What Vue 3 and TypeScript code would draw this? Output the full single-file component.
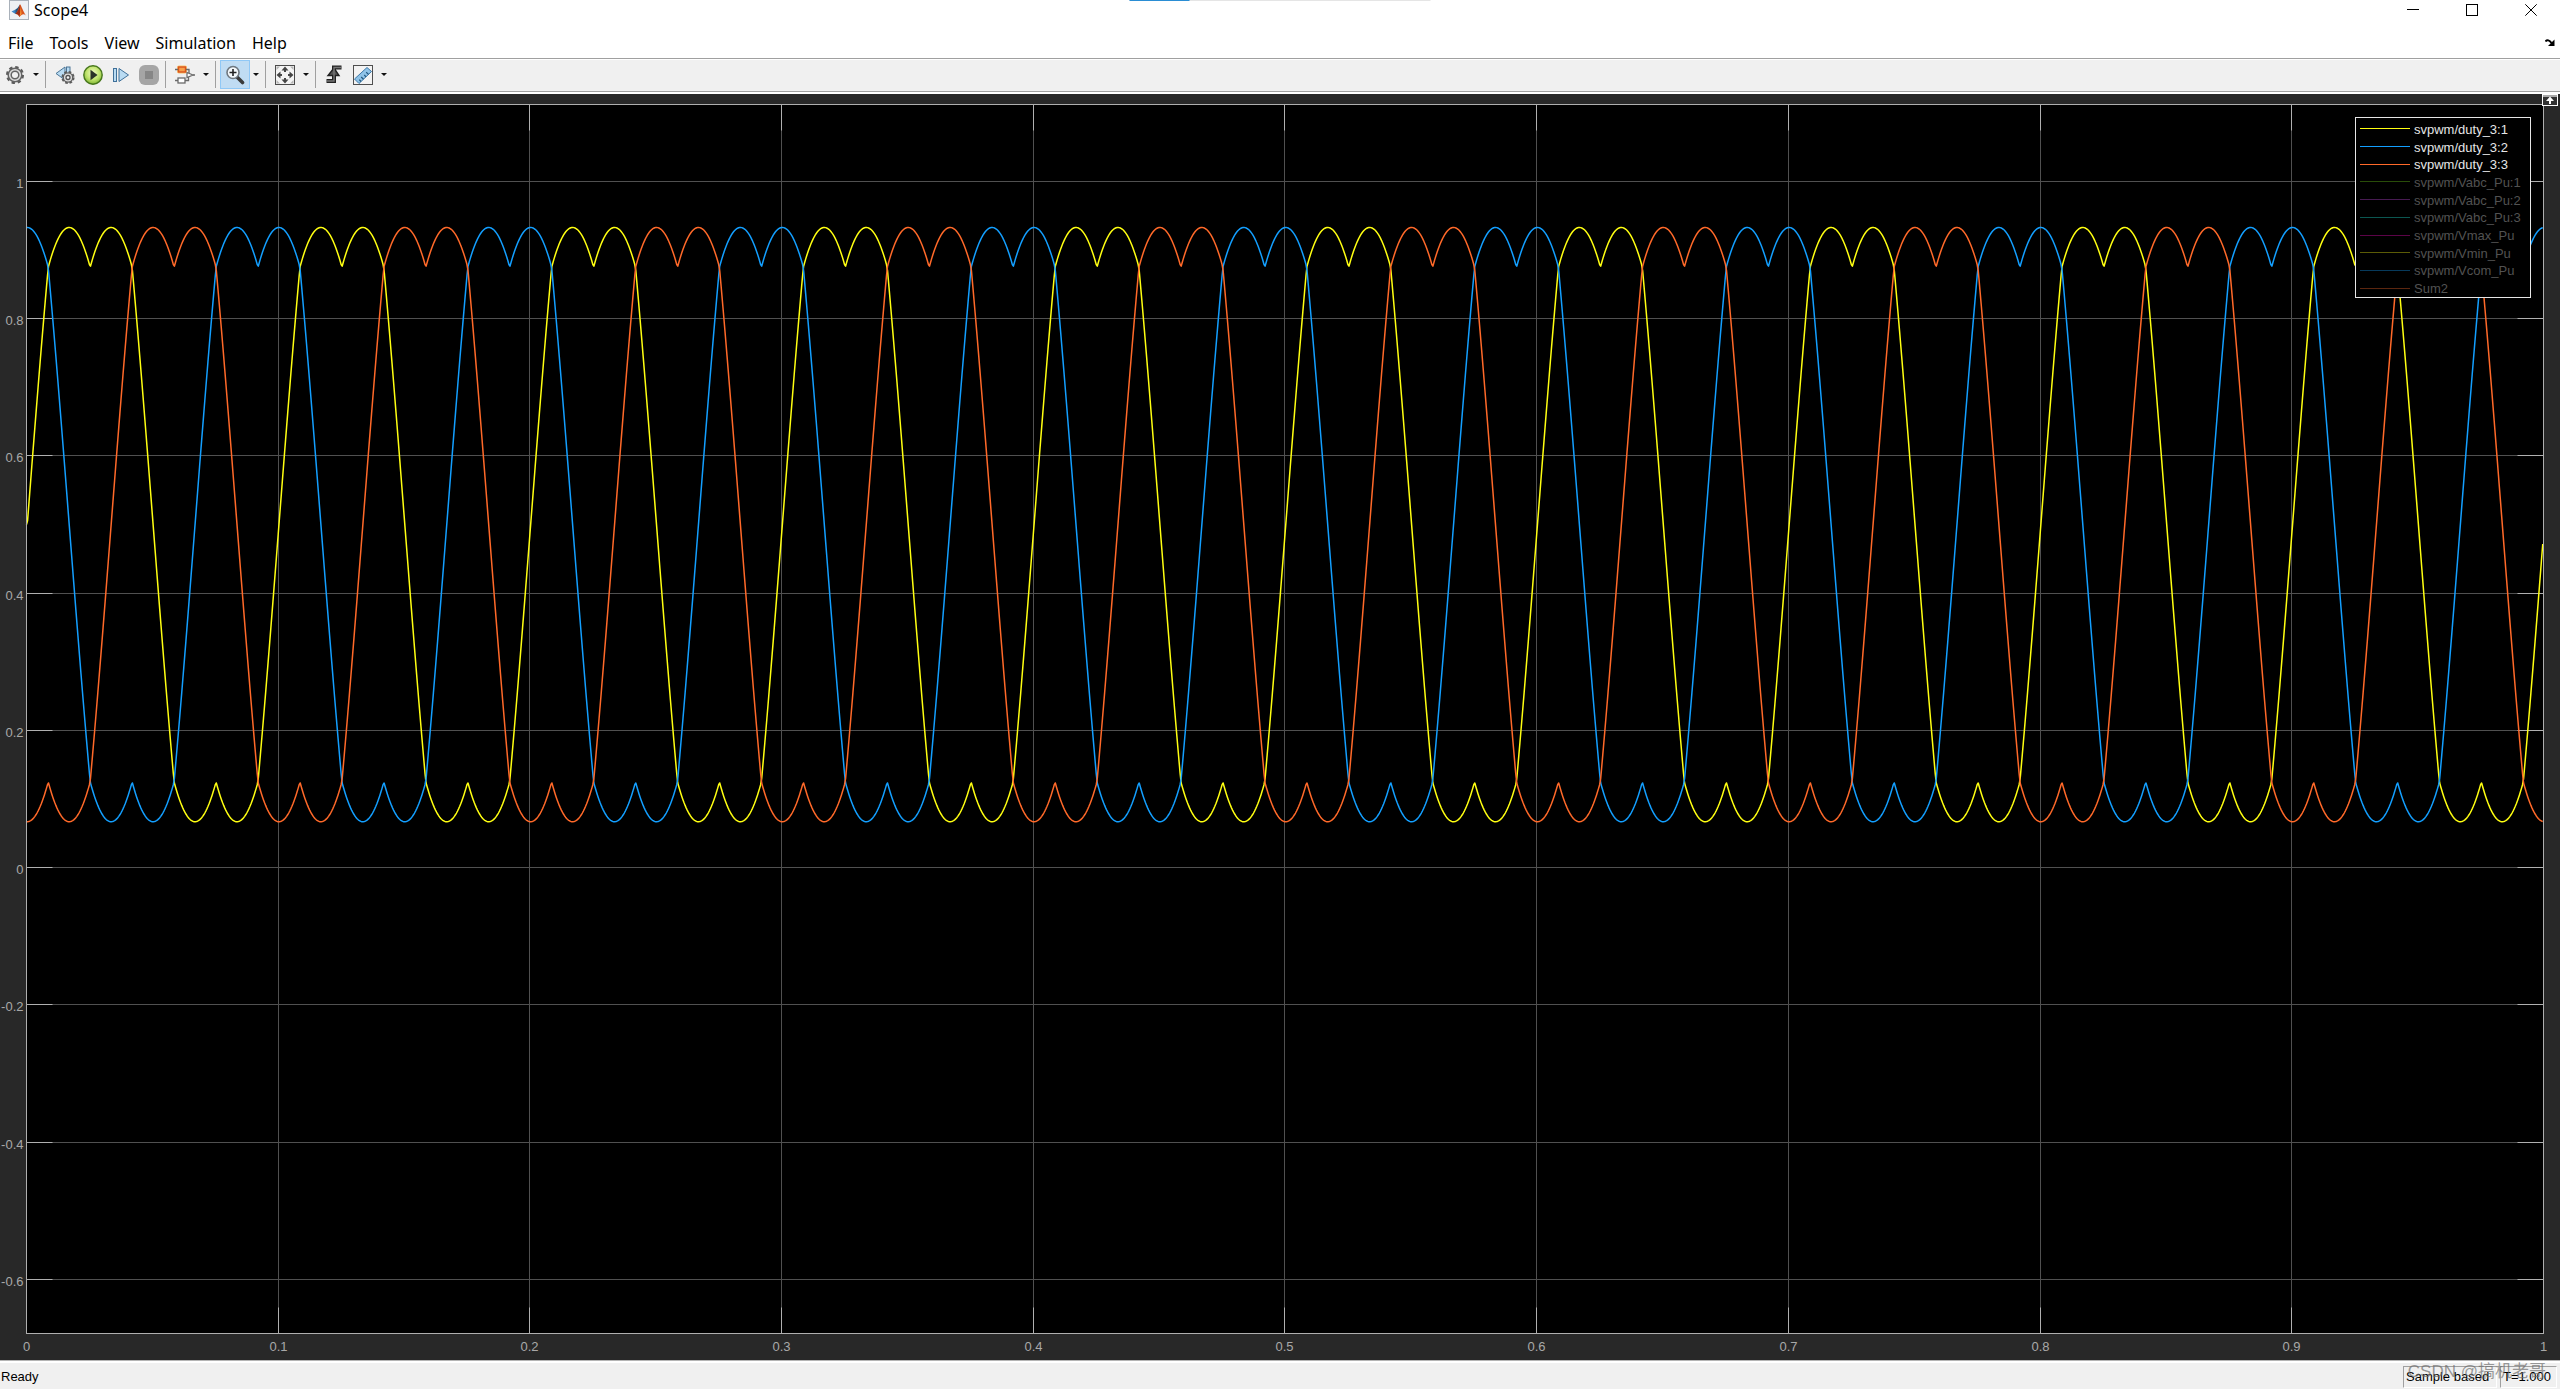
<script setup lang="ts">
import { computed, onBeforeUnmount, onMounted, ref } from 'vue'

interface LegendEntry {
  name: string
  color: string
  active: boolean
}

const menus: string[] = ['File', 'Tools', 'View', 'Simulation', 'Help']

const legend: LegendEntry[] = [
  { name: 'svpwm/duty_3:1', color: '#ffff11', active: true },
  { name: 'svpwm/duty_3:2', color: '#139fff', active: true },
  { name: 'svpwm/duty_3:3', color: '#ff6929', active: true },
  { name: 'svpwm/Vabc_Pu:1', color: '#294d09', active: false },
  { name: 'svpwm/Vabc_Pu:2', color: '#471b52', active: false },
  { name: 'svpwm/Vabc_Pu:3', color: '#0b5751', active: false },
  { name: 'svpwm/Vmax_Pu', color: '#5c0448', active: false },
  { name: 'svpwm/Vmin_Pu', color: '#5c5c06', active: false },
  { name: 'svpwm/Vcom_Pu', color: '#073a5c', active: false },
  { name: 'Sum2', color: '#5c260f', active: false },
]

// Size of the canvas that holds the axes, kept in step with the window.
const canvas = ref<HTMLElement | null>(null)
const width = ref(2560)
const height = ref(1266)

const margin = { left: 26, right: 17, top: 10, bottom: 27 }
const yTop = 1.1122
const yBottom = -0.6788
const tick = 26

const plot = computed(() => ({
  x0: margin.left + 0.5,
  x1: width.value - margin.right + 0.5,
  y0: margin.top + 0.5,
  y1: height.value - margin.bottom + 0.5,
}))

function px(t: number): number {
  return plot.value.x0 + t * (plot.value.x1 - plot.value.x0)
}

function py(v: number): number {
  return plot.value.y0 + ((yTop - v) / (yTop - yBottom)) * (plot.value.y1 - plot.value.y0)
}

function crisp(v: number): number {
  return Math.ceil(v) - 0.5
}

const xTicks = computed(() =>
  Array.from({ length: 11 }, (_, i) => ({
    label: String(i / 10),
    x: crisp(px(i / 10)),
    inner: i > 0 && i < 10,
  })),
)

const yTicks = computed(() =>
  Array.from({ length: 9 }, (_, i) => {
    const v = (5 - i) / 5
    return { label: String(v), y: crisp(py(v)) }
  }),
)

// Space-vector duty cycles: three sines shifted by the min/max common mode.
const amplitude = 0.5
const frequency = 10
const delay = 0.0003
const tEnd = 0.9997

function duties(t: number): number[] {
  const w = 2 * Math.PI * frequency * Math.max(0, t - delay)
  const shift = (2 * Math.PI) / 3
  const v = [w, w + shift, w - shift].map((a) => amplitude * Math.sin(a))
  const common = (Math.max(...v) + Math.min(...v)) / 2
  return v.map((s) => s - common + 0.5)
}

const traces = computed(() => {
  const samples = 2400
  const points: string[][] = [[], [], []]
  for (let i = 0; i <= samples; i++) {
    const t = Math.min(i / samples, tEnd)
    const x = px(t).toFixed(2)
    duties(t).forEach((d, k) => points[k].push(`${x},${py(d).toFixed(2)}`))
  }
  return points.map((p, k) => ({ points: p.join(' '), color: legend[k].color }))
})

let observer: ResizeObserver | undefined

function measure(): void {
  if (!canvas.value) return
  width.value = canvas.value.clientWidth
  height.value = canvas.value.clientHeight
}

onMounted(() => {
  measure()
  if (canvas.value) {
    observer = new ResizeObserver(measure)
    observer.observe(canvas.value)
  }
})

onBeforeUnmount(() => observer?.disconnect())
</script>

<template>
  <div class="window">
    <div class="progress" aria-hidden="true"><span class="progress-done"></span></div>

    <header class="titlebar">
      <svg class="logo" width="20" height="20" viewBox="0 0 20 20" aria-hidden="true">
        <rect x="0.5" y="0.5" width="19" height="19" fill="#eef1f4" stroke="#a9b1ba" />
        <path d="M2.5 11.5 6.5 9.5 9 12 6.5 14z" fill="#3e86c4" />
        <path d="M6.5 9.5 8.5 8 11 4.5 9.5 11.5 6.5 14z" fill="#27547f" />
        <path d="M11 4.2C12.5 6 14.5 12 17 15.5 14.5 13.5 13 14 10.5 17 9.5 14.8 8.5 13.8 6.5 14 9 11.5 10 7 11 4.2z" fill="#d9541e" />
        <path d="M11 4.2C11.8 8 11 13 10.5 17 9.5 14.8 8.5 13.8 6.5 14 9.5 11 10.2 8 11 4.2z" fill="#9c2c14" />
        <path d="M11.2 6C12 9 12.5 12 12.5 14 11.8 14.8 11.2 15.6 10.7 16.2 11.6 12 11.6 9 11.2 6z" fill="#f79a35" />
      </svg>
      <h1 class="title">Scope4</h1>
      <div class="controls">
        <button type="button" class="control" aria-label="Minimize">
          <svg width="12" height="12" viewBox="0 0 12 12"><path d="M0 5.5H12" stroke="#000" /></svg>
        </button>
        <button type="button" class="control" aria-label="Maximize">
          <svg width="12" height="12" viewBox="0 0 12 12"><rect x="0.5" y="0.5" width="11" height="11" fill="none" stroke="#000" /></svg>
        </button>
        <button type="button" class="control" aria-label="Close">
          <svg width="12" height="12" viewBox="0 0 12 12"><path d="M0.3 0.3 11.7 11.7M11.7 0.3 0.3 11.7" stroke="#000" /></svg>
        </button>
      </div>
    </header>

    <nav class="menubar" aria-label="Menu">
      <button v-for="menu in menus" :key="menu" type="button" class="menu">{{ menu }}</button>
      <button type="button" class="dock" aria-label="Dock window">
        <svg width="10" height="8" viewBox="0 0 10 8">
          <path d="M0.5 2.5C2 0.5 4.5 1 6.5 4" fill="none" stroke="#000" stroke-width="2" />
          <path d="M9.5 0.5V7H3z" fill="#000" />
        </svg>
      </button>
    </nav>

    <div class="toolbar" role="toolbar" aria-label="Scope tools">
      <div class="group">
        <button type="button" class="tool" aria-label="Configuration properties">
          <svg width="20" height="20" viewBox="0 0 20 20">
            <circle cx="10" cy="10" r="7.5" fill="none" stroke="#5b5b5b" stroke-width="3" stroke-dasharray="3.2 2.69" />
            <circle cx="10" cy="10" r="6.8" fill="#dcdcdc" stroke="#646464" stroke-width="1.5" />
            <circle cx="10" cy="10" r="3.8" fill="#f0f0f0" stroke="#646464" stroke-width="1.5" />
          </svg>
        </button>
        <button type="button" class="drop" aria-label="More configuration"><i class="caret"></i></button>
      </div>

      <div class="group">
        <button type="button" class="tool" aria-label="Stepping options">
          <svg width="20" height="20" viewBox="0 0 20 20">
            <path d="M1 8.5 10 2V15z" fill="#b9dbf2" stroke="#4b7596" />
            <rect x="11.5" y="2" width="3.5" height="10" fill="#b9dbf2" stroke="#4b7596" />
            <circle cx="13" cy="12.5" r="5.3" fill="none" stroke="#5b5b5b" stroke-width="2.6" stroke-dasharray="2.5 1.66" />
            <circle cx="13" cy="12.5" r="4.7" fill="#dedede" stroke="#606060" stroke-width="1.3" />
            <circle cx="13" cy="12.5" r="2" fill="#f4f4f4" stroke="#505050" stroke-width="1.3" />
          </svg>
        </button>
        <button type="button" class="tool" aria-label="Run">
          <svg width="20" height="20" viewBox="0 0 20 20">
            <defs>
              <radialGradient id="runFill" cx="0.5" cy="0.4" r="0.6">
                <stop offset="0" stop-color="#f2fbc8" />
                <stop offset="0.6" stop-color="#bfe36c" />
                <stop offset="1" stop-color="#7fb634" />
              </radialGradient>
            </defs>
            <circle cx="10" cy="10" r="9.2" fill="url(#runFill)" stroke="#46761c" stroke-width="1.4" />
            <path d="M7.5 4.8 14.5 10 7.5 15.2z" fill="#2b3328" />
          </svg>
        </button>
        <button type="button" class="tool" aria-label="Step forward">
          <svg width="18" height="18" viewBox="0 0 18 18">
            <rect x="1.5" y="2.5" width="3" height="13" fill="#b9dbf2" stroke="#3f7099" />
            <path d="M7 2.5 16.5 9 7 15.5z" fill="#b9dbf2" stroke="#3f7099" />
          </svg>
        </button>
        <button type="button" class="tool" aria-label="Stop" disabled>
          <svg width="20" height="20" viewBox="0 0 20 20">
            <rect x="0" y="0" width="20" height="20" rx="6" fill="#a5a5a5" />
            <rect x="6" y="6" width="8" height="8" fill="#868686" />
          </svg>
        </button>
      </div>

      <div class="group">
        <button type="button" class="tool" aria-label="Highlight Simulink block">
          <svg width="20" height="20" viewBox="0 0 20 20">
            <rect x="2" y="0.5" width="10" height="8" rx="2" fill="#fbc46a" />
            <rect x="3.5" y="2" width="7" height="5" fill="#f7a04b" stroke="#d9541e" stroke-width="1.4" />
            <path d="M0 4.5H3M11 4.5H14V8M0 15.5H3M10 15.5H13.5V12M18 10H20" fill="none" stroke="#6a6a6a" stroke-width="1.3" />
            <rect x="3" y="13" width="7" height="5" fill="#fff" stroke="#6a6a6a" stroke-width="1.3" />
            <path d="M12 7.5 18 10 12 12.5z" fill="#fff" stroke="#6a6a6a" stroke-width="1.2" />
          </svg>
        </button>
        <button type="button" class="drop" aria-label="More highlight options"><i class="caret"></i></button>
      </div>

      <div class="group">
        <button type="button" class="tool pressed" aria-label="Zoom in" aria-pressed="true">
          <svg width="20" height="20" viewBox="0 0 20 20">
            <path d="M12 12 17.5 17.5" stroke="#3a3a3a" stroke-width="3.6" stroke-linecap="round" />
            <circle cx="8" cy="7.5" r="6" fill="#f4f8fb" stroke="#6f7880" stroke-width="1.6" />
            <path d="M8 4V11M4.5 7.5H11.5" stroke="#222" stroke-width="1.6" />
          </svg>
        </button>
        <button type="button" class="drop" aria-label="More zoom options"><i class="caret"></i></button>
      </div>

      <div class="group">
        <button type="button" class="tool" aria-label="Scale axes limits">
          <svg width="20" height="20" viewBox="0 0 20 20">
            <rect x="0.5" y="0.5" width="19" height="19" fill="#f4f4f4" stroke="#4b4b4b" />
            <path d="M10 1.5 13.5 5.5H6.5zM10 18.5 13.5 14.5H6.5zM1.5 10 5.5 6.5V13.5zM18.5 10 14.5 6.5V13.5z" fill="#454545" />
            <path d="M10 5V7M10 13V15M5 10H7M13 10H15" stroke="#454545" stroke-width="2" />
            <path d="M1.5 1.5H5L1.5 5zM18.5 1.5V5L15 1.5zM1.5 18.5V15L5 18.5zM18.5 18.5H15L18.5 15z" fill="#b5b5b5" />
          </svg>
        </button>
        <button type="button" class="drop" aria-label="More scaling options"><i class="caret"></i></button>
      </div>

      <div class="group">
        <button type="button" class="tool" aria-label="Triggers">
          <svg width="20" height="20" viewBox="0 0 20 20">
            <path d="M16.5 2.5H9V16H1.5" fill="none" stroke="#222" stroke-width="4" />
            <path d="M9 3 14 10.5H3z" fill="#555" stroke="#222" stroke-width="1.4" />
            <path d="M16 2.5H9V16H2" fill="none" stroke="#777" stroke-width="1.4" />
          </svg>
        </button>
        <button type="button" class="tool" aria-label="Cursor measurements">
          <svg width="20" height="20" viewBox="0 0 20 20">
            <rect x="0.5" y="0.5" width="19" height="19" fill="#f3f3f3" stroke="#4f4f4f" />
            <path d="M1.5 14 14 2.5 18.5 6.5 6 18.5z" fill="#8fc3e8" stroke="#3c78a8" />
            <path d="M8 16.5 6.3 14.7M10.5 14.2 8.2 12M13 11.8 11.3 10M15.5 9.4 13.2 7.2" stroke="#22587f" stroke-width="1.2" />
          </svg>
        </button>
        <button type="button" class="drop" aria-label="More measurements"><i class="caret"></i></button>
      </div>
    </div>

    <main ref="canvas" class="scope">
      <svg class="chart" :width="width" :height="height" role="img" aria-label="Duty cycles over time">
        <rect :x="plot.x0" :y="plot.y0" :width="plot.x1 - plot.x0" :height="plot.y1 - plot.y0" fill="#000" />

        <g class="grid">
          <template v-for="t in xTicks" :key="t.label">
            <line v-if="t.inner" :x1="t.x" :x2="t.x" :y1="plot.y0" :y2="plot.y1" />
          </template>
          <line v-for="t in yTicks" :key="t.label" :x1="plot.x0" :x2="plot.x1" :y1="t.y" :y2="t.y" />
        </g>

        <g class="axis">
          <template v-for="t in xTicks" :key="t.label">
            <path v-if="t.inner" :d="`M${t.x} ${plot.y0}v${tick}M${t.x} ${plot.y1}v${-tick}`" />
          </template>
          <path v-for="t in yTicks" :key="t.label" :d="`M${plot.x0} ${t.y}h${tick}M${plot.x1} ${t.y}h${-tick}`" />
        </g>

        <polyline v-for="trace in traces" :key="trace.color" class="trace" :points="trace.points" :stroke="trace.color" />

        <rect class="frame" :x="plot.x0" :y="plot.y0" :width="plot.x1 - plot.x0" :height="plot.y1 - plot.y0" />

        <g class="labels">
          <text v-for="t in xTicks" :key="t.label" :x="t.x" :y="plot.y1 + 17" text-anchor="middle">{{ t.label }}</text>
        </g>
        <g class="labels">
          <text v-for="t in yTicks" :key="t.label" :x="plot.x0 - 3" :y="t.y + 6" text-anchor="end">{{ t.label }}</text>
        </g>
      </svg>

      <ul class="legend">
        <li v-for="entry in legend" :key="entry.name" class="entry" :class="{ muted: !entry.active }">
          <span class="swatch" :style="{ background: entry.color }"></span>
          <span class="name">{{ entry.name }}</span>
        </li>
      </ul>

      <button type="button" class="expand" aria-label="Maximize axes">
        <svg width="16" height="12" viewBox="0 0 16 12">
          <rect x="0.5" y="0.5" width="15" height="11" fill="#333" stroke="#fff" />
          <path d="M1 2H15" stroke="#aaa" stroke-width="2" />
          <path d="M8 2.5 12 7H9V10H7V7H4z" fill="#fff" />
        </svg>
      </button>
    </main>

    <footer class="status">
      <span class="ready">Ready</span>
      <span class="cell cell-mode">Sample based</span>
      <span class="cell cell-time">T=1.000</span>
      <span class="watermark">CSDN @搞机老哥</span>
    </footer>
  </div>
</template>

<style>
body {
  margin: 0;
  background: #fff;
}
</style>

<style scoped>
.window {
  position: relative;
  display: flex;
  flex-direction: column;
  height: 100vh;
  overflow: hidden;
  background: #fff;
  color: #000;
  font-family: 'Noto Sans', 'Open Sans', sans-serif;
  font-size: 16px;
  line-height: 20px;
}

button {
  margin: 0;
  padding: 0;
  border: 0;
  background: none;
  color: inherit;
  font: inherit;
}

svg {
  display: block;
}

.progress {
  position: absolute;
  top: 0;
  left: 50%;
  width: 301px;
  height: 1px;
  background: #e5e5e5;
  transform: translateX(-50%);
}

.progress-done {
  display: block;
  width: 60px;
  height: 1px;
  background: #2a8dd4;
}

.titlebar {
  display: flex;
  align-items: center;
  height: 20px;
  padding-left: 9px;
}

.title {
  margin: 0 0 0 5px;
  font-size: 16px;
  font-weight: 400;
}

.controls {
  display: flex;
  margin-left: auto;
}

.control {
  display: flex;
  align-items: center;
  justify-content: center;
  width: 59px;
  height: 20px;
}

.menubar {
  display: flex;
  align-items: center;
  height: 28px;
  margin-top: 9px;
  padding-bottom: 1px;
}

.menu {
  padding: 0 8px;
}

.dock {
  margin-left: auto;
  padding-right: 5px;
}

.toolbar {
  display: flex;
  align-items: flex-start;
  height: 30px;
  margin-bottom: 2px;
  padding: 2px 0 0 1px;
  border-top: 1px solid #a0a0a0;
  border-bottom: 1px solid #a0a0a0;
  box-shadow: inset 0 1px #fff;
  background: #f0f0f0;
}

.group {
  display: flex;
  align-items: center;
}

.group + .group::before {
  content: '';
  width: 1px;
  height: 27px;
  margin: 0 5px 0 2px;
  background: #a0a0a0;
}

.tool {
  display: flex;
  align-items: center;
  justify-content: center;
  width: 28px;
  height: 27px;
}

.pressed {
  background: #c0dcf3;
  box-shadow: 0 0 0 1px #90c8f6;
}

.drop {
  display: flex;
  align-items: center;
  justify-content: center;
  width: 14px;
  height: 27px;
}

.caret {
  border: 3px solid transparent;
  border-top-color: #111;
  border-bottom: 0;
}

.scope {
  position: relative;
  flex: 1;
  min-height: 0;
  overflow: hidden;
  background: #282828;
  font-family: 'Liberation Sans', Arial, sans-serif;
  font-size: 13px;
}

.grid line {
  stroke: #505050;
}

.axis path {
  stroke: #b0b0b0;
}

.frame {
  fill: none;
  stroke: #afafaf;
}

.trace {
  fill: none;
  stroke-width: 1.5px;
  stroke-linejoin: round;
}

.labels text {
  fill: #a8a8a8;
}

.legend {
  position: absolute;
  top: 23px;
  right: 29px;
  box-sizing: border-box;
  display: grid;
  grid-auto-rows: 1fr;
  width: 176px;
  height: 181px;
  margin: 0;
  padding: 2px 0 0 4px;
  border: 1px solid #e6e6e6;
  background: #000;
  color: #e6e6e6;
  list-style: none;
}

.entry {
  display: flex;
  align-items: center;
  gap: 4px;
  line-height: 14px;
  white-space: nowrap;
}

.name {
  padding-top: 2px;
}

.muted {
  color: #525252;
}

.swatch {
  width: 50px;
  height: 1px;
}

.expand {
  position: absolute;
  top: 0;
  right: 2px;
}

.status {
  position: relative;
  display: flex;
  align-items: flex-end;
  gap: 3px;
  height: 27px;
  padding: 0 3px 1px 1px;
  border-top: 1px solid #b4b4b4;
  box-shadow: inset 0 2px #fff;
  background: #f0f0f0;
  font-family: 'Liberation Sans', Arial, sans-serif;
  font-size: 13px;
}

.ready {
  margin-right: auto;
  line-height: 22px;
}

.cell {
  box-sizing: border-box;
  height: 22px;
  padding-left: 2px;
  border: 1px solid #a0a0a0;
  border-right-color: #fff;
  border-bottom-color: #fff;
}

.cell-mode {
  width: 94px;
}

.cell-time {
  width: 57px;
}

.watermark {
  position: absolute;
  right: 14px;
  bottom: 7px;
  color: rgba(110, 110, 110, 0.7);
  font-family: 'Liberation Sans', 'Noto Sans CJK SC', sans-serif;
  font-size: 17px;
}
</style>
